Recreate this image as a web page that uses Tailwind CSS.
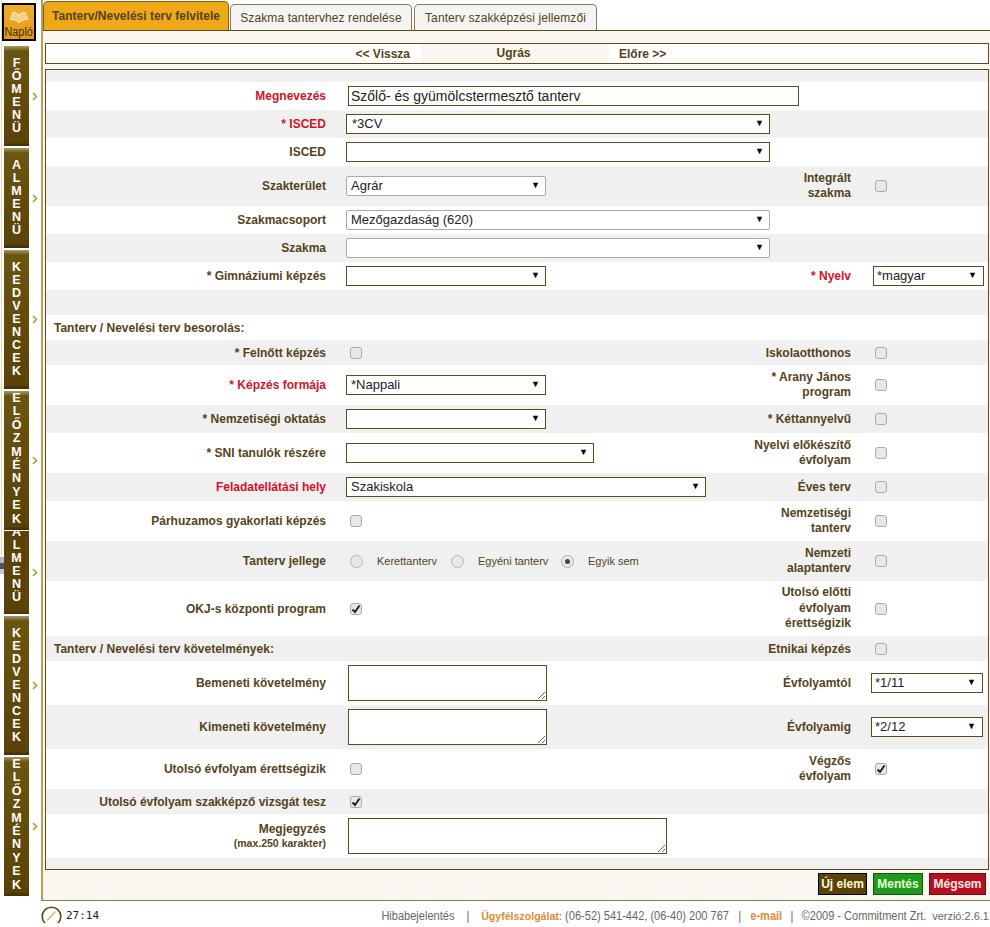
<!DOCTYPE html>
<html lang="en">
<head>
<meta charset="UTF-8">
<title>Tanterv</title>
<script src="https://cdn.jsdelivr.net/npm/@tailwindcss/browser@4"></script>
</head>
<body class="bg-white font-['Liberation_Sans',Arial,sans-serif] text-[#55431a] overflow-hidden">
<div class="relative w-[990px] h-[927px] flex overflow-hidden">

  <!-- leftover stripes at the window edge -->
  <div class="absolute left-[1px] top-0 w-[1px] h-[556px] bg-[#e6d8a8]"></div>
  <div class="absolute left-0 top-[557px] w-[4px] h-[6px] bg-[#b9b2c4]"></div>
  <div class="absolute left-0 top-[563px] w-[4px] h-[6px] bg-[#555]"></div>
  <div class="absolute left-0 top-[569px] w-[4px] h-[5px] bg-[#c9c9c9]"></div>

  <!-- Sidebar -->
  <div class="w-[41px] shrink-0 flex flex-col">
    <div class="mt-[3px] ml-[2px] w-[34px] h-[38px] border-2 border-black bg-gradient-to-b from-[#f0ae2c] to-[#e39a12] flex flex-col items-center justify-end">
      <svg width="20" height="14" viewBox="0 0 20 14" class="mb-[1px]" fill="#f5cf80" stroke="#fbe9c0" stroke-width="1.2"><path d="M10 12.5C8 10 4.5 9.5 1.5 9.5L4 2.5C6.5 2.5 9 3.5 10 6C11 3.5 13.5 2.5 16 2.5L18.5 9.5C15.5 9.5 12 10 10 12.5Z"/></svg>
      <span class="text-[12px] leading-[14px] text-[#3a2a08] scale-x-90">Napló</span>
    </div>
    <div class="mt-[5px] flex flex-col gap-[2px]">
      <div class="flex items-center"><div class="ml-[4px] w-[25px] h-[100px] bg-[linear-gradient(to_bottom,#a89a6a_0,#6a5510_5px,#5a4208_96%,#3f2e04_100%)] flex flex-col items-center justify-center text-white font-bold text-[12.5px] leading-[13px]"><span>F</span><span>Ő</span><span>M</span><span>E</span><span>N</span><span>Ü</span></div><svg width="6" height="9" viewBox="0 0 6 9" class="ml-[3px]" fill="none" stroke="#b89b3e" stroke-width="1.7"><path d="M1 1l3.5 3.5L1 8"/></svg></div>
      <div class="flex items-center"><div class="ml-[4px] w-[25px] h-[100px] bg-[linear-gradient(to_bottom,#a89a6a_0,#6a5510_5px,#5a4208_96%,#3f2e04_100%)] flex flex-col items-center justify-center text-white font-bold text-[12.5px] leading-[13px]"><span>A</span><span>L</span><span>M</span><span>E</span><span>N</span><span>Ü</span></div><svg width="6" height="9" viewBox="0 0 6 9" class="ml-[3px]" fill="none" stroke="#b89b3e" stroke-width="1.7"><path d="M1 1l3.5 3.5L1 8"/></svg></div>
      <div class="flex items-center"><div class="ml-[4px] w-[25px] h-[139px] bg-[linear-gradient(to_bottom,#a89a6a_0,#6a5510_5px,#5a4208_97%,#3f2e04_100%)] flex flex-col items-center justify-center text-white font-bold text-[12.5px] leading-[13px]"><span>K</span><span>E</span><span>D</span><span>V</span><span>E</span><span>N</span><span>C</span><span>E</span><span>K</span></div><svg width="6" height="9" viewBox="0 0 6 9" class="ml-[3px]" fill="none" stroke="#b89b3e" stroke-width="1.7"><path d="M1 1l3.5 3.5L1 8"/></svg></div>
      <div class="flex items-center"><div class="ml-[4px] w-[25px] h-[139px] bg-[linear-gradient(to_bottom,#a89a6a_0,#6a5510_5px,#5a4208_97%,#3f2e04_100%)] flex flex-col items-center justify-start pt-[1px] text-white font-bold text-[12.5px] leading-[13.4px]"><span>E</span><span>L</span><span>Ő</span><span>Z</span><span>M</span><span>É</span><span>N</span><span>Y</span><span>E</span><span>K</span></div><svg width="6" height="9" viewBox="0 0 6 9" class="ml-[3px]" fill="none" stroke="#b89b3e" stroke-width="1.7"><path d="M1 1l3.5 3.5L1 8"/></svg></div>
      <div class="flex items-center -mt-[1px]"><div class="ml-[4px] w-[25px] h-[83px] bg-[linear-gradient(to_bottom,#5a4208_96%,#3f2e04_100%)] flex flex-col items-center text-white font-bold text-[12.5px] leading-[13px] overflow-hidden"><span class="-mt-[5px]">A</span><span>L</span><span>M</span><span>E</span><span>N</span><span>Ü</span></div><svg width="6" height="9" viewBox="0 0 6 9" class="ml-[3px]" fill="none" stroke="#b89b3e" stroke-width="1.7"><path d="M1 1l3.5 3.5L1 8"/></svg></div>
      <div class="flex items-center"><div class="ml-[4px] w-[25px] h-[139px] bg-[linear-gradient(to_bottom,#a89a6a_0,#6a5510_5px,#5a4208_97%,#3f2e04_100%)] flex flex-col items-center justify-center text-white font-bold text-[12.5px] leading-[13px]"><span>K</span><span>E</span><span>D</span><span>V</span><span>E</span><span>N</span><span>C</span><span>E</span><span>K</span></div><svg width="6" height="9" viewBox="0 0 6 9" class="ml-[3px]" fill="none" stroke="#b89b3e" stroke-width="1.7"><path d="M1 1l3.5 3.5L1 8"/></svg></div>
      <div class="flex items-center"><div class="ml-[4px] w-[25px] h-[139px] bg-[linear-gradient(to_bottom,#a89a6a_0,#6a5510_5px,#5a4208_97%,#3f2e04_100%)] flex flex-col items-center justify-start pt-[1px] text-white font-bold text-[12.5px] leading-[13.4px]"><span>E</span><span>L</span><span>Ő</span><span>Z</span><span>M</span><span>É</span><span>N</span><span>Y</span><span>E</span><span>K</span></div><svg width="6" height="9" viewBox="0 0 6 9" class="ml-[3px]" fill="none" stroke="#b89b3e" stroke-width="1.7"><path d="M1 1l3.5 3.5L1 8"/></svg></div>
    </div>
  </div>

  <!-- Main -->
  <div class="flex-1 flex flex-col min-w-0">
    <div class="h-[901px] border-l-2 border-l-[#b5a05a] border-b border-b-[#8a7a50] bg-[#faf6f0] flex flex-col">
      <!-- Tabs -->
      <div class="h-[31px] bg-white flex items-end border-b border-[#5a4a1e]">
        <div class="h-[29px] w-[186px] bg-[#eea818] border border-[#7a6420] border-b-0 rounded-t-[5px] text-[12px] font-bold flex items-center justify-center">Tanterv/Nevelési terv felvitele</div>
        <div class="ml-[1px] h-[26px] w-[182px] bg-[#f4f4f2] border border-[#8a7a50] border-b-0 rounded-t-[5px] text-[12px] tracking-[0.1px] flex items-center justify-center">Szakma tantervhez rendelése</div>
        <div class="ml-[2px] h-[26px] w-[183px] bg-[#f4f4f2] border border-[#8a7a50] border-b-0 rounded-t-[5px] text-[12px] tracking-[0.1px] flex items-center justify-center">Tanterv szakképzési jellemzői</div>
      </div>
      <!-- Pager -->
      <div class="mt-[12px] ml-[2px] mr-[1px] h-[21px] bg-white border border-[#5a4a1e] flex items-center text-[12px] font-bold">
        <div class="w-[375px] text-right pr-[11px]">&lt;&lt; Vissza</div>
        <div class="w-[188px] h-full bg-[#faf6f0] text-center leading-[19px] pr-[3px]">Ugrás</div>
        <div class="pl-[10px]">Előre &gt;&gt;</div>
      </div>
      <!-- Form -->
      <div class="mt-[5px] ml-[2px] mr-[1px] h-[801px] bg-white border border-[#5a4a1e] text-[12px] font-bold flex flex-col">
        <div class="h-[12px] bg-[#f0f0f0]"></div>

        <div class="h-[28px] grid grid-cols-[280px_425px_100px_1fr] items-center"><div class="text-right text-[#d4112a]">Megnevezés</div><div class="col-span-3 pl-[22px]"><div class="w-[451px] h-[20px] border border-[#5a4a1e] bg-white font-normal text-[14px] text-[#222] leading-[18px] pl-[2px]">Szőlő- és gyümölcstermesztő tanterv</div></div></div>

        <div class="h-[28px] bg-[#f0f0f0] grid grid-cols-[280px_425px_100px_1fr] items-center"><div class="text-right text-[#d4112a]">* ISCED</div><div class="col-span-3 pl-[20px]"><div class="w-[424px] h-[20px] border border-[#5a4a1e] bg-white font-normal text-[13px] text-[#222] flex items-center justify-between pl-[5px] pr-[5px]"><span>*3CV</span><span class="text-[9px] text-black">▼</span></div></div></div>

        <div class="h-[28px] grid grid-cols-[280px_425px_100px_1fr] items-center"><div class="text-right">ISCED</div><div class="col-span-3 pl-[20px]"><div class="w-[424px] h-[20px] border border-[#5a4a1e] bg-white font-normal text-[13px] text-[#222] flex items-center justify-end px-[5px]"><span class="text-[9px] text-black">▼</span></div></div></div>

        <div class="h-[40px] bg-[#f0f0f0] grid grid-cols-[280px_425px_100px_1fr] items-center"><div class="text-right">Szakterület</div><div class="pl-[20px]"><div class="w-[200px] h-[20px] border border-[#a9a9a9] rounded-[2px] bg-white font-normal text-[13px] text-[#222] flex items-center justify-between pl-[4px] pr-[5px]"><span>Agrár</span><span class="text-[9px] text-black">▼</span></div></div><div class="text-right leading-[15px]">Integrált<br>szakma</div><div class="pl-[24px] h-[12px]"><div class="size-[12px] bg-[#e8e8e8] border border-[#aaa] rounded-[3px]"></div></div></div>

        <div class="h-[28px] grid grid-cols-[280px_425px_100px_1fr] items-center"><div class="text-right">Szakmacsoport</div><div class="col-span-3 pl-[20px]"><div class="w-[424px] h-[20px] border border-[#a9a9a9] rounded-[2px] bg-white font-normal text-[13px] text-[#222] flex items-center justify-between pl-[4px] pr-[5px]"><span>Mezőgazdaság (620)</span><span class="text-[9px] text-black">▼</span></div></div></div>

        <div class="h-[28px] bg-[#f0f0f0] grid grid-cols-[280px_425px_100px_1fr] items-center"><div class="text-right">Szakma</div><div class="col-span-3 pl-[20px]"><div class="w-[424px] h-[20px] border border-[#a9a9a9] rounded-[2px] bg-white font-normal text-[13px] text-[#222] flex items-center justify-end px-[5px]"><span class="text-[9px] text-black">▼</span></div></div></div>

        <div class="h-[28px] grid grid-cols-[280px_425px_100px_1fr] items-center"><div class="text-right">* Gimnáziumi képzés</div><div class="pl-[20px]"><div class="w-[200px] h-[20px] border border-[#5a4a1e] bg-white font-normal text-[13px] text-[#222] flex items-center justify-end px-[5px]"><span class="text-[9px] text-black">▼</span></div></div><div class="text-right text-[#d4112a]">* Nyelv</div><div class="pl-[22px]"><div class="w-[111px] h-[20px] border border-[#5a4a1e] bg-white font-normal text-[13px] text-[#222] flex items-center justify-between pl-[3px] pr-[6px]"><span>*magyar</span><span class="text-[9px] text-black">▼</span></div></div></div>

        <div class="h-[25px] bg-[#f0f0f0]"></div>

        <div class="h-[25px] flex items-center pl-[8px]">Tanterv / Nevelési terv besorolás:</div>

        <div class="h-[25px] bg-[#f0f0f0] grid grid-cols-[280px_425px_100px_1fr] items-center"><div class="text-right">* Felnőtt képzés</div><div class="pl-[24px] h-[12px]"><div class="size-[12px] bg-[#e8e8e8] border border-[#aaa] rounded-[3px]"></div></div><div class="text-right">Iskolaotthonos</div><div class="pl-[24px] h-[12px]"><div class="size-[12px] bg-[#e8e8e8] border border-[#aaa] rounded-[3px]"></div></div></div>

        <div class="h-[40px] grid grid-cols-[280px_425px_100px_1fr] items-center"><div class="text-right text-[#d4112a]">* Képzés formája</div><div class="pl-[20px]"><div class="w-[200px] h-[20px] border border-[#5a4a1e] bg-white font-normal text-[13px] text-[#222] flex items-center justify-between pl-[4px] pr-[5px]"><span>*Nappali</span><span class="text-[9px] text-black">▼</span></div></div><div class="text-right leading-[15px]">* Arany János<br>program</div><div class="pl-[24px] h-[12px]"><div class="size-[12px] bg-[#e8e8e8] border border-[#aaa] rounded-[3px]"></div></div></div>

        <div class="h-[28px] bg-[#f0f0f0] grid grid-cols-[280px_425px_100px_1fr] items-center"><div class="text-right">* Nemzetiségi oktatás</div><div class="pl-[20px]"><div class="w-[200px] h-[20px] border border-[#5a4a1e] bg-white font-normal text-[13px] text-[#222] flex items-center justify-end px-[5px]"><span class="text-[9px] text-black">▼</span></div></div><div class="text-right">* Kéttannyelvű</div><div class="pl-[24px] h-[12px]"><div class="size-[12px] bg-[#e8e8e8] border border-[#aaa] rounded-[3px]"></div></div></div>

        <div class="h-[40px] grid grid-cols-[280px_425px_100px_1fr] items-center"><div class="text-right">* SNI tanulók részére</div><div class="pl-[20px]"><div class="w-[248px] h-[20px] border border-[#5a4a1e] bg-white font-normal text-[13px] text-[#222] flex items-center justify-end px-[5px]"><span class="text-[9px] text-black">▼</span></div></div><div class="text-right leading-[15px]">Nyelvi előkészítő<br>évfolyam</div><div class="pl-[24px] h-[12px]"><div class="size-[12px] bg-[#e8e8e8] border border-[#aaa] rounded-[3px]"></div></div></div>

        <div class="h-[28px] bg-[#f0f0f0] grid grid-cols-[280px_425px_100px_1fr] items-center"><div class="text-right text-[#d4112a]">Feladatellátási hely</div><div class="pl-[20px]"><div class="w-[360px] h-[20px] border border-[#5a4a1e] bg-white font-normal text-[13px] text-[#222] flex items-center justify-between pl-[4px] pr-[5px]"><span>Szakiskola</span><span class="text-[9px] text-black">▼</span></div></div><div class="text-right">Éves terv</div><div class="pl-[24px] h-[12px]"><div class="size-[12px] bg-[#e8e8e8] border border-[#aaa] rounded-[3px]"></div></div></div>

        <div class="h-[40px] grid grid-cols-[280px_425px_100px_1fr] items-center"><div class="text-right">Párhuzamos gyakorlati képzés</div><div class="pl-[24px] h-[12px]"><div class="size-[12px] bg-[#e8e8e8] border border-[#aaa] rounded-[3px]"></div></div><div class="text-right leading-[15px]">Nemzetiségi<br>tanterv</div><div class="pl-[24px] h-[12px]"><div class="size-[12px] bg-[#e8e8e8] border border-[#aaa] rounded-[3px]"></div></div></div>

        <div class="h-[40px] bg-[#f0f0f0] grid grid-cols-[280px_425px_100px_1fr] items-center"><div class="text-right">Tanterv jellege</div>
          <div class="pl-[24px] flex items-center font-normal text-[11px]">
            <div class="w-[101px] flex items-center gap-[14px]"><div class="size-[13px] rounded-full bg-[#e8e8e8] border border-[#b5b5b5]"></div><span>Kerettanterv</span></div>
            <div class="w-[110px] flex items-center gap-[14px]"><div class="size-[13px] rounded-full bg-[#e8e8e8] border border-[#b5b5b5]"></div><span>Egyéni tanterv</span></div>
            <div class="flex items-center gap-[14px]"><div class="size-[13px] rounded-full bg-[#e8e8e8] border border-[#b5b5b5] flex items-center justify-center"><div class="size-[5px] rounded-full bg-[#444]"></div></div><span>Egyik sem</span></div>
          </div>
          <div class="text-right leading-[15px]">Nemzeti<br>alaptanterv</div><div class="pl-[24px] h-[12px]"><div class="size-[12px] bg-[#e8e8e8] border border-[#aaa] rounded-[3px]"></div></div></div>

        <div class="h-[55px] grid grid-cols-[280px_425px_100px_1fr] items-center"><div class="text-right">OKJ-s központi program</div><div class="pl-[24px] h-[12px]"><div class="size-[12px] bg-[#e8e8e8] border border-[#aaa] rounded-[3px] flex items-center justify-center"><svg width="10" height="10" viewBox="0 0 10 10" fill="none" stroke="#222" stroke-width="2"><path d="M1.5 5.5L4 8L8.5 1.5"/></svg></div></div><div class="text-right leading-[15.5px]">Utolsó előtti<br>évfolyam<br>érettségizik</div><div class="pl-[24px] h-[12px]"><div class="size-[12px] bg-[#e8e8e8] border border-[#aaa] rounded-[3px]"></div></div></div>

        <div class="h-[25px] bg-[#f0f0f0] grid grid-cols-[280px_425px_100px_1fr] items-center"><div class="col-span-2 pl-[8px]">Tanterv / Nevelési terv követelmények:</div><div class="text-right">Etnikai képzés</div><div class="pl-[24px] h-[12px]"><div class="size-[12px] bg-[#e8e8e8] border border-[#aaa] rounded-[3px]"></div></div></div>

        <div class="h-[44px] grid grid-cols-[280px_425px_100px_1fr] items-center"><div class="text-right">Bemeneti követelmény</div><div class="pl-[22px] flex"><textarea class="w-[199px] h-[36px] border border-[#5a4a1e] bg-white"></textarea></div><div class="text-right">Évfolyamtól</div><div class="pl-[20px]"><div class="w-[112px] h-[20px] border border-[#5a4a1e] bg-white font-normal text-[13px] text-[#222] flex items-center justify-between pl-[3px] pr-[6px]"><span>*1/11</span><span class="text-[9px] text-black">▼</span></div></div></div>

        <div class="h-[44px] bg-[#f0f0f0] grid grid-cols-[280px_425px_100px_1fr] items-center"><div class="text-right">Kimeneti követelmény</div><div class="pl-[22px] flex"><textarea class="w-[199px] h-[36px] border border-[#5a4a1e] bg-white"></textarea></div><div class="text-right">Évfolyamig</div><div class="pl-[20px]"><div class="w-[112px] h-[20px] border border-[#5a4a1e] bg-white font-normal text-[13px] text-[#222] flex items-center justify-between pl-[3px] pr-[6px]"><span>*2/12</span><span class="text-[9px] text-black">▼</span></div></div></div>

        <div class="h-[40px] grid grid-cols-[280px_425px_100px_1fr] items-center"><div class="text-right">Utolsó évfolyam érettségizik</div><div class="pl-[24px] h-[12px]"><div class="size-[12px] bg-[#e8e8e8] border border-[#aaa] rounded-[3px]"></div></div><div class="text-right leading-[15px]">Végzős<br>évfolyam</div><div class="pl-[24px] h-[12px]"><div class="size-[12px] bg-[#e8e8e8] border border-[#aaa] rounded-[3px] flex items-center justify-center"><svg width="10" height="10" viewBox="0 0 10 10" fill="none" stroke="#222" stroke-width="2"><path d="M1.5 5.5L4 8L8.5 1.5"/></svg></div></div></div>

        <div class="h-[25px] bg-[#f0f0f0] grid grid-cols-[280px_425px_100px_1fr] items-center"><div class="text-right">Utolsó évfolyam szakképző vizsgát tesz</div><div class="pl-[24px] h-[12px]"><div class="size-[12px] bg-[#e8e8e8] border border-[#aaa] rounded-[3px] flex items-center justify-center"><svg width="10" height="10" viewBox="0 0 10 10" fill="none" stroke="#222" stroke-width="2"><path d="M1.5 5.5L4 8L8.5 1.5"/></svg></div></div></div>

        <div class="h-[44px] grid grid-cols-[280px_425px_100px_1fr] items-center"><div class="text-right leading-[14px]">Megjegyzés<br><span class="text-[10.5px] leading-[13px]">(max.250 karakter)</span></div><div class="pl-[22px] flex"><textarea class="w-[319px] h-[36px] border border-[#5a4a1e] bg-white"></textarea></div></div>

        <div class="flex-1 bg-[#f0f0f0]"></div>
      </div>
      <!-- Buttons -->
      <div class="mt-[3px] flex justify-end gap-[6px] pr-[4px] text-[12px] font-bold">
        <div class="h-[22px] w-[49px] bg-[#5a4208] border border-black text-[#fff6d8] text-center leading-[20px]">Új elem</div>
        <div class="h-[22px] w-[50px] bg-[#1f9a1f] border border-[#0c5a0c] text-[#e5ffd0] text-center leading-[20px]">Mentés</div>
        <div class="h-[22px] w-[57px] bg-[#b5121e] border border-[#6a0a10] text-[#ffe8e8] text-center leading-[20px]">Mégsem</div>
      </div>
    </div>
    <!-- Footer -->
    <div class="flex-1 flex items-start text-[12px] text-[#666]">
      <div class="mt-[5px] h-[17px] overflow-hidden shrink-0">
        <svg width="21" height="21" viewBox="0 0 21 21" fill="none"><circle cx="10.5" cy="10.5" r="9.3" stroke="#5a4a1e" stroke-width="1.6"/><path d="M6 14.5L14.5 5.5" stroke="#e0b040" stroke-width="1.3"/></svg>
      </div>
      <span class="mt-[8px] ml-[4px] font-['DejaVu_Sans_Mono',monospace] text-[11px] leading-[14px] text-[#222]">27:14</span>
      <div class="mt-[8px] ml-auto flex items-center whitespace-nowrap pr-[1px] leading-[14px]">
        <div class="flex items-center scale-x-[.92] origin-right">
          <span>Hibabejelentés</span>
          <span class="mx-[13px] text-[#666]">|</span>
          <span class="font-bold text-[11.5px] text-[#e08a3a]">Ügyfélszolgálat:</span>
          <span class="ml-[3px]">(06-52) 541-442, (06-40) 200 767</span>
          <span class="mx-[10px] text-[#666]">|</span>
          <span class="font-bold text-[#e08a3a]">e-mail</span>
          <span class="mx-[9px] text-[#666]">|</span>
          <span>©2009 - Commitment Zrt.</span>
        </div>
        <span class="ml-[6px] text-[11px]">verzió:2.6.1</span>
      </div>
    </div>
  </div>
</div>
</body>
</html>
